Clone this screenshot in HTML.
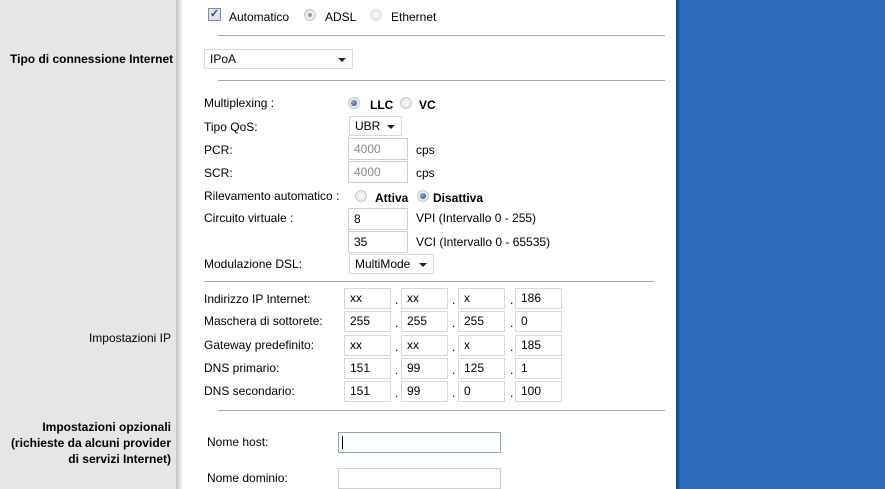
<!DOCTYPE html>
<html><head><meta charset="utf-8"><style>
*{margin:0;padding:0;box-sizing:border-box}
body{width:885px;height:489px;overflow:hidden;position:relative;background:#fff;font-family:"Liberation Sans",Arial,sans-serif;font-size:12px;color:#000}
.a{position:absolute;white-space:nowrap;line-height:14px}
.b{font-weight:bold}
#left{position:absolute;left:0;top:0;width:176px;height:489px;background:#e6e6e6}
#sh{position:absolute;left:176px;top:0;width:6px;height:489px;background:linear-gradient(to right,#c4c4c4,#dcdcdc 50%,#f4f4f4)}
#right{position:absolute;left:676px;top:0;width:209px;height:489px;background:#2e6dba}
#edge{position:absolute;left:676px;top:0;width:5px;height:489px;background:linear-gradient(to right,#1a3f6e,#24569a,#2e6dba)}
.hl{position:absolute;height:1px;background:#a6a6c8}
.in{position:absolute;border:1px solid #cfcfcf;background:#fff;height:22px;padding-left:5px;line-height:20px;font-size:12px}
.sel{position:absolute;border:1px solid #d9d9d9;background:#fff;height:20px;padding-left:5px;line-height:18px}
.sel:after{content:"";position:absolute;right:6px;top:8px;border-left:4px solid transparent;border-right:4px solid transparent;border-top:4px solid #222}
.r{position:absolute;width:12px;height:12px;border-radius:50%;border:1px solid #c8c8c8;background:radial-gradient(circle,#fafafa,#e2e2e2)}
.r.on:after{content:"";position:absolute;left:2px;top:2px;width:6px;height:6px;border-radius:50%;background:radial-gradient(circle at 40% 35%,#9ad,#157 90%)}
.r.gr:after{content:"";position:absolute;left:3px;top:3px;width:4px;height:4px;border-radius:50%;background:#999}
.ip{position:absolute;border:1px solid #d8d8d8;background:#fff;width:47px;height:21px;padding-left:5px;line-height:19px}
.gray{color:#888}
</style></head><body>
<div id="left"></div><div id="sh"></div><div id="right"></div><div id="edge"></div>

<div style="position:absolute;left:208px;top:8px;width:13px;height:13px;border:1px solid #8a8a8a;background:#dde4f0;font-size:11px;line-height:11px;text-align:center;color:#2a3f8f;font-weight:bold">✓</div>
<div class="a" style="left:229px;top:10px">Automatico</div>
<div class="r gr" style="left:304px;top:9px"></div>
<div class="a" style="left:325px;top:10px">ADSL</div>
<div class="r" style="left:370px;top:9px;border-color:#ddd"></div>
<div class="a" style="left:391px;top:10px">Ethernet</div>
<div class="hl" style="left:218px;top:35px;width:447px"></div>

<div class="a b" style="left:10px;top:52px">Tipo di connessione Internet</div>
<div class="sel" style="left:204px;top:49px;width:149px;height:20px">IPoA</div>
<div class="hl" style="left:218px;top:80px;width:447px"></div>

<div class="a" style="left:204px;top:96px">Multiplexing :</div>
<div class="r on" style="left:348px;top:97px"></div>
<div class="a b" style="left:370px;top:98px">LLC</div>
<div class="r" style="left:400px;top:97px"></div>
<div class="a b" style="left:419px;top:98px">VC</div>

<div class="a" style="left:204px;top:120px">Tipo QoS:</div>
<div class="sel" style="left:349px;top:116px;width:53px">UBR</div>

<div class="a" style="left:204px;top:143px">PCR:</div>
<div class="in gray" style="left:348px;top:138px;width:60px">4000</div>
<div class="a" style="left:416px;top:143px">cps</div>
<div class="a" style="left:204px;top:166px">SCR:</div>
<div class="in gray" style="left:348px;top:161px;width:60px">4000</div>
<div class="a" style="left:416px;top:166px">cps</div>

<div class="a" style="left:204px;top:189px">Rilevamento automatico :</div>
<div class="r" style="left:355px;top:190px"></div>
<div class="a b" style="left:375px;top:191px">Attiva</div>
<div class="r on" style="left:417px;top:190px"></div>
<div class="a b" style="left:433px;top:191px">Disattiva</div>

<div class="a" style="left:204px;top:211px">Circuito virtuale :</div>
<div class="in" style="left:348px;top:208px;width:60px">8</div>
<div class="a" style="left:416px;top:211px">VPI (Intervallo 0 - 255)</div>
<div class="in" style="left:348px;top:231px;width:60px">35</div>
<div class="a" style="left:416px;top:235px">VCI (Intervallo 0 - 65535)</div>

<div class="a" style="left:204px;top:257px">Modulazione DSL:</div>
<div class="sel" style="left:349px;top:254px;width:85px">MultiMode</div>
<div class="hl" style="left:204px;top:281px;width:450px"></div>

<div class="a" style="right:714px;top:331px">Impostazioni IP</div>

<div class="a" style="left:204px;top:292px">Indirizzo IP Internet:</div>
<div class="ip" style="left:344px;top:288px">xx</div><div class="a" style="left:395px;top:293px">.</div>
<div class="ip" style="left:401px;top:288px">xx</div><div class="a" style="left:452px;top:293px">.</div>
<div class="ip" style="left:458px;top:288px">x</div><div class="a" style="left:510px;top:293px">.</div>
<div class="ip" style="left:515px;top:288px">186</div>

<div class="a" style="left:204px;top:314px">Maschera di sottorete:</div>
<div class="ip" style="left:344px;top:311px">255</div><div class="a" style="left:395px;top:316px">.</div>
<div class="ip" style="left:401px;top:311px">255</div><div class="a" style="left:452px;top:316px">.</div>
<div class="ip" style="left:458px;top:311px">255</div><div class="a" style="left:510px;top:316px">.</div>
<div class="ip" style="left:515px;top:311px">0</div>

<div class="a" style="left:204px;top:338px">Gateway predefinito:</div>
<div class="ip" style="left:344px;top:335px">xx</div><div class="a" style="left:395px;top:340px">.</div>
<div class="ip" style="left:401px;top:335px">xx</div><div class="a" style="left:452px;top:340px">.</div>
<div class="ip" style="left:458px;top:335px">x</div><div class="a" style="left:510px;top:340px">.</div>
<div class="ip" style="left:515px;top:335px">185</div>

<div class="a" style="left:204px;top:361px">DNS primario:</div>
<div class="ip" style="left:344px;top:358px">151</div><div class="a" style="left:395px;top:363px">.</div>
<div class="ip" style="left:401px;top:358px">99</div><div class="a" style="left:452px;top:363px">.</div>
<div class="ip" style="left:458px;top:358px">125</div><div class="a" style="left:510px;top:363px">.</div>
<div class="ip" style="left:515px;top:358px">1</div>

<div class="a" style="left:204px;top:384px">DNS secondario:</div>
<div class="ip" style="left:344px;top:381px">151</div><div class="a" style="left:395px;top:386px">.</div>
<div class="ip" style="left:401px;top:381px">99</div><div class="a" style="left:452px;top:386px">.</div>
<div class="ip" style="left:458px;top:381px">0</div><div class="a" style="left:510px;top:386px">.</div>
<div class="ip" style="left:515px;top:381px">100</div>

<div class="hl" style="left:218px;top:410px;width:447px"></div>

<div class="a b" style="right:714px;top:419px;text-align:right;line-height:16px">Impostazioni opzionali<br>(richieste da alcuni provider<br>di servizi Internet)</div>

<div class="a" style="left:207px;top:435px">Nome host:</div>
<div style="position:absolute;left:338px;top:432px;width:163px;height:21px;border:1px solid #8fa8bd;background:#fff"><div style="position:absolute;left:3px;top:3px;width:1px;height:13px;background:#000"></div></div>
<div class="a" style="left:207px;top:471px">Nome dominio:</div>
<div style="position:absolute;left:338px;top:468px;width:163px;height:21px;border:1px solid #cfcfcf;background:#fff"></div>
</body></html>
